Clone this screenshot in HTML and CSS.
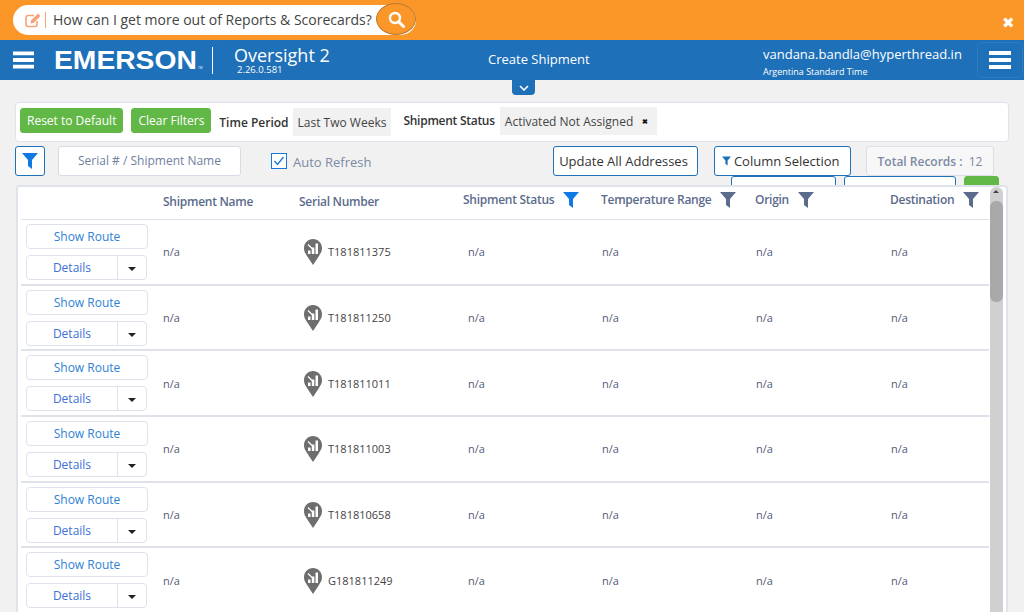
FILE: index.html
```html
<!DOCTYPE html>
<html lang="en">
<head>
  <meta charset="UTF-8">
  <meta name="viewport" content="width=device-width, initial-scale=1.0">
  <title>Create Shipment</title>
  <link rel="stylesheet" href="styles.css">
</head>
<body>
  <svg class="defs" width="0" height="0">
    <symbol id="funnel" viewBox="0 0 16 16"><path d="M0 0h16L10 7v9L6 13V7z"/></symbol>
    <symbol id="pin" viewBox="0 0 18 26">
      <path d="M9 0c5 0 9 4 9 9 0 4-1.500 5-3 8l-6 9-6-9C1.500 14 0 13 0 9c0-5 4-9 9-9z" fill="#6e6e6e"/>
      <path d="M4 15h2.500v-3.500H4zM7.800 15h2.500V8.500H7.800zM11.500 15H14V4.500h-2.500z" fill="#fff"/>
      <path d="M4 5.500l6 6" stroke="#fff" stroke-width="1.300"/>
    </symbol>
    <symbol id="bars" viewBox="0 0 22 18"><path d="M0 0h22v4H0zM0 7h22v4H0zM0 14h22v4H0z"/></symbol>
  </svg>

  <div class="promo">
    <div class="ask">
      <svg class="ask-icon" width="17" height="16" viewBox="0 0 17 16"><path d="M12 9v3.500a2 2 0 0 1-2 2H3a2 2 0 0 1-2-2v-7a2 2 0 0 1 2-2h6" fill="none" stroke="#f5a277" stroke-width="1.600"/><path d="M6 8.500L13 1.500l2.500 2.500-7 7-3 .5z" fill="#f5a277"/></svg>
      <span class="ask-text">How can I get more out of Reports &amp; Scorecards?</span>
      <span class="ask-go">
        <svg width="17" height="17" viewBox="0 0 17 17"><circle cx="7" cy="7" r="5" fill="none" stroke="#fff" stroke-width="2.400"/><path d="M10.500 10.500l5 5" stroke="#fff" stroke-width="3" stroke-linecap="round"/></svg>
      </span>
    </div>
    <span class="promo-close">&#10006;</span>
  </div>

  <header class="topbar">
    <svg class="bars" width="21" height="18" fill="#fff"><use href="#bars"/></svg>
    <span class="logo"><span class="logo-word">EMERSON</span><span class="logo-tm">TM</span></span>
    <div class="product">
      <div class="product-name">Oversight 2</div>
      <div class="product-ver">2.26.0.581</div>
    </div>
    <div class="page-title">Create Shipment</div>
    <div class="user">
      <div class="user-mail">vandana.bandla@hyperthread.in</div>
      <div class="user-tz">Argentina Standard Time</div>
    </div>
    <button class="menu-btn"><svg width="22" height="18" fill="#fff"><use href="#bars"/></svg></button>
  </header>
  <div class="pull-wrap">
    <span class="pull"><svg width="10" height="6" viewBox="0 0 10 6"><path d="M1 1l4 4 4-4" fill="none" stroke="#fff" stroke-width="1.600"/></svg></span>
  </div>

  <main class="content">
    <section class="filters">
      <button class="green-btn">Reset to Default</button>
      <button class="green-btn">Clear Filters</button>
      <span class="f-label">Time Period</span>
      <span class="f-chip">Last Two Weeks</span>
      <span class="f-label f-label-second">Shipment Status</span>
      <span class="f-chip f-chip-status">Activated Not Assigned <b class="chip-x">&#10006;</b></span>
    </section>

    <section class="tools">
      <button class="icon-btn"><svg width="16" height="16" fill="#0f7ae5"><use href="#funnel"/></svg></button>
      <div class="search">Serial # / Shipment Name</div>
      <label class="auto"><span class="check"><svg width="12" height="10" viewBox="0 0 12 10"><path d="M1.500 5l3 3.500 6-7.500" fill="none" stroke="#1478dc" stroke-width="1.300"/></svg></span>Auto Refresh</label>
      <button class="line-btn update-btn">Update All Addresses</button>
      <button class="line-btn col-btn"><svg width="9" height="10" fill="#1e70b9"><use href="#funnel"/></svg> Column Selection</button>
      <div class="total"><b>Total Records :</b> <span class="total-num">12</span></div>
    </section>

    <div class="hidden-row">
      <span class="peek peek-a"></span>
      <span class="peek peek-b"></span>
      <span class="peek peek-c"></span>
    </div>

    <section class="card">
      <div class="table">
        <div class="row head">
          <div></div>
          <div class="th low">Shipment Name</div>
          <div class="th low">Serial Number</div>
          <div class="th">Shipment Status <svg width="16" height="16" fill="#0f7ae5"><use href="#funnel"/></svg></div>
          <div class="th">Temperature Range <svg width="16" height="16" fill="#5b6b8c"><use href="#funnel"/></svg></div>
          <div class="th">Origin <svg width="16" height="16" fill="#5b6b8c"><use href="#funnel"/></svg></div>
          <div class="th">Destination <svg width="16" height="16" fill="#5b6b8c"><use href="#funnel"/></svg></div>
        </div>
        <div id="rows"></div>
      </div>
      <div class="scroll">
        <span class="scroll-up"></span>
        <span class="scroll-thumb"></span>
      </div>
    </section>
  </main>

  <script>
    const serials = ['T181811375', 'T181811250', 'T181811011', 'T181811003', 'T181810658', 'G181811249'];
    const rows = document.getElementById('rows');

    serials.forEach(serial => {
      const row = document.createElement('div');
      row.className = 'row item';
      row.innerHTML = `
        <div class="actions">
          <button class="route-btn">Show Route</button>
          <div class="details"><span class="details-main">Details</span><span class="details-caret"></span></div>
        </div>
        <div class="cell">n/a</div>
        <div class="cell serial"><svg width="18" height="26"><use href="#pin"/></svg>${serial}</div>
        <div class="cell pad">n/a</div>
        <div class="cell pad-sm">n/a</div>
        <div class="cell pad-sm">n/a</div>
        <div class="cell pad-sm">n/a</div>`;
      rows.appendChild(row);
    });
  </script>
</body>
</html>
```

FILE: styles.css
```css
* {
  box-sizing: border-box;
}

html,
body {
  height: 100%;
}

body {
  font-family: "Open Sans", Arial, sans-serif;
  background-color: #f1f1f1;
  margin: 0;
  overflow: hidden;
  color: #333;
}

button {
  font-family: inherit;
  cursor: pointer;
}

.defs {
  display: block;
  height: 0;
}

/* orange strip */
.promo {
  height: 40px;
  background-color: #fb9629;
  display: flex;
  align-items: center;
  justify-content: space-between;
  padding: 0 9px 0 13px;
}

.ask {
  width: 403px;
  height: 30px;
  background: #fff;
  border-radius: 15px;
  display: flex;
  align-items: center;
  padding-left: 12px;
  position: relative;
}

.ask-icon {
  margin-right: 3px;
}

.ask-text {
  border-left: 1px solid #f5a277;
  padding-left: 7px;
  font-size: 14px;
  line-height: 16px;
  color: #444;
  white-space: nowrap;
}

.ask-go {
  position: absolute;
  right: 0;
  top: -2px;
  width: 40px;
  height: 32px;
  border-radius: 50%;
  border: 1px solid #bd7a35;
  background: #fb9629;
  display: flex;
  align-items: center;
  justify-content: center;
}

.promo-close {
  color: #fff;
  font-size: 15px;
  margin-top: 4px;
}

/* blue bar */
.topbar {
  height: 40px;
  background-color: #1e70b9;
  color: #fff;
  display: flex;
  align-items: center;
  padding-left: 13px;
}

.logo {
  width: 159px;
  margin-left: 20px;
  height: 27px;
  border-right: 1px solid #fff;
  display: flex;
  align-items: center;
  white-space: nowrap;
  position: relative;
}

.logo-word {
  font-family: "Liberation Sans", Arial, sans-serif;
  font-weight: 700;
  font-size: 25px;
  transform: scaleX(1.13);
  transform-origin: left center;
}

.logo-tm {
  position: absolute;
  left: 144px;
  bottom: 4px;
  font-size: 3px;
}

.product {
  width: 275px;
  padding-left: 21px;
}

.product-name {
  font-size: 18px;
  line-height: 20px;
}

.product-ver {
  font-size: 9.500px;
  line-height: 10px;
  padding-left: 3px;
}

.page-title {
  width: 275px;
  font-size: 13px;
  margin-top: -2px;
}

.user {
  width: 214px;
}

.user-mail {
  font-size: 13px;
  line-height: 16px;
  margin-top: 3px;
}

.user-tz {
  font-size: 9px;
  line-height: 13px;
  margin-top: 3px;
}

.menu-btn {
  width: 46px;
  height: 36px;
  background: none;
  border: 1px solid #2a7cc4;
  border-radius: 4px;
  display: flex;
  align-items: center;
  justify-content: center;
  padding: 0;
}

.pull-wrap {
  height: 15px;
  padding-left: 512px;
}

.pull {
  width: 23px;
  height: 15px;
  display: flex;
  align-items: center;
  justify-content: center;
  background: #1e70b9;
  border-radius: 0 0 4px 4px;
}

/* main area */
.content {
  padding: 7px 15px 0;
}

.filters {
  height: 40px;
  width: 994px;
  background: #fff;
  border: 1px solid #e0e3ec;
  border-radius: 4px;
  display: flex;
  align-items: center;
  padding-left: 4px;
}

.green-btn {
  height: 25px;
  margin-bottom: 3px;
  background-color: #62b846;
  border: 1px solid #62b846;
  border-radius: 3px;
  color: #fff;
  font-size: 12px;
  padding: 0 6px;
  margin-right: 8px;
  white-space: nowrap;
}

.f-label {
  font-size: 12px;
  font-weight: 600;
  color: #333;
}

.f-label-second {
  letter-spacing: -0.270px;
  margin-left: 12px;
  margin-bottom: 3px;
}

.f-chip {
  height: 28px;
  margin-left: 4px;
  background: #f1f1f1;
  font-size: 12px;
  color: #444;
  display: flex;
  align-items: center;
  padding: 0 5px;
  white-space: nowrap;
}

.f-chip-status {
  margin-left: 5px;
  margin-bottom: 2px;
  padding-right: 8px;
  width: 157px;
}

.chip-x {
  font-size: 7px;
  color: #111;
  margin-left: 9px;
}

.tools {
  display: flex;
  height: 30px;
  margin-top: 4px;
  width: 994px;
}

.icon-btn {
  width: 30px;
  height: 30px;
  background: #fff;
  border: 1px solid #1e70b9;
  border-radius: 3px;
  padding: 0;
  display: flex;
  align-items: center;
  justify-content: center;
}

.search {
  width: 183px;
  height: 30px;
  margin-left: 13px;
  background: #fff;
  border: 1px solid #d8dce6;
  border-radius: 3px;
  text-align: center;
  line-height: 27px;
  font-size: 12px;
  color: #6f7fa0;
}

.auto {
  display: flex;
  align-items: center;
  font-size: 13px;
  color: #7c8aa5;
  margin-left: 30px;
  width: 282px;
  padding-top: 2px;
}

.check {
  width: 16px;
  height: 16px;
  border: 1px solid #1478dc;
  background: #fff;
  display: flex;
  align-items: center;
  justify-content: center;
  margin-right: 6px;
  margin-top: -2px;
}

.line-btn {
  height: 30px;
  background: #fff;
  border: 1px solid #1e70b9;
  border-radius: 3px;
  font-size: 13px;
  color: #333;
  padding: 0 4px 0 0;
  white-space: nowrap;
}

.update-btn {
  width: 145px;
}

.col-btn {
  width: 137px;
  margin-left: 16px;
}

.total {
  width: 128px;
  height: 30px;
  margin-left: 15px;
  background: #f7f7f7;
  border: 1px solid #dcdfe8;
  border-radius: 3px;
  text-align: center;
  line-height: 30px;
  font-size: 12px;
  color: #7c8aa5;
}

.total b {
  font-weight: 600;
}

.total-num {
  margin-left: 3px;
}

/* buttons that sit behind the table card */
.hidden-row {
  height: 9px;
  overflow: hidden;
  position: relative;
}

.peek {
  position: absolute;
  top: 0;
  height: 20px;
  background: #fff;
  border: 1px solid #1e70b9;
  border-radius: 3px;
}

.peek-a {
  left: 716px;
  width: 105px;
}

.peek-b {
  left: 829px;
  width: 112px;
}

.peek-c {
  left: 949px;
  width: 35px;
  background: #62b846;
  border-color: #62b846;
}

.card {
  width: 992px;
  height: 440px;
  margin-left: 1px;
  background: #fff;
  border: 2px solid #e0e3ec;
  border-radius: 4px;
  display: flex;
  overflow: hidden;
}

.table {
  width: 971px;
  flex: none;
}

.row {
  display: grid;
  grid-template-columns: 142px 136px 164px 138px 154px 135px 102px;
}

.head {
  height: 33px;
  padding-bottom: 8px;
  border-bottom: 1px solid #dfe2ea;
  margin-left: 3px;
}

.th {
  font-size: 12px;
  font-weight: 600;
  letter-spacing: -0.270px;
  color: #5b6b8c;
  display: flex;
  align-items: center;
  gap: 9px;
  white-space: nowrap;
}

.th svg {
  margin-top: 2px;
}

.th.low {
  padding-top: 4px;
}

.item {
  height: 65.650px;
  margin-left: 3px;
  border-bottom: 2px solid #dfe2ea;
}

.actions {
  padding: 4px 0 0 5px;
}

.route-btn {
  display: block;
  width: 122px;
  height: 25px;
  padding: 0;
  background: #fff;
  border: 1px solid #dfe2ea;
  border-radius: 4px;
  color: #2f7fd6;
  font-size: 12px;
}

.details {
  display: flex;
  width: 121px;
  height: 25px;
  margin-top: 6px;
  border: 1px solid #dfe2ea;
  border-radius: 4px;
}

.details-main {
  width: 91px;
  border-right: 1px solid #dfe2ea;
  text-align: center;
  line-height: 23px;
  font-size: 12px;
  color: #3c6fd8;
}

.details-caret {
  flex: 1;
  position: relative;
}

.details-caret::after {
  content: "";
  position: absolute;
  left: 10px;
  top: 11px;
  border: 4px solid transparent;
  border-top-color: #222;
  border-bottom: 0;
}

.cell {
  font-size: 11px;
  color: #555a78;
  display: flex;
  align-items: center;
}

.serial {
  gap: 6px;
  color: #444;
  padding-left: 5px;
}

.serial svg {
  margin-top: 1px;
}

.pad {
  padding-left: 5px;
}

.pad-sm {
  padding-left: 1px;
}

.scroll {
  width: 13px;
  flex: none;
  background: #d0d0d0;
  border-radius: 6px 6px 0 0;
  margin-left: 1px;
}

.scroll-up {
  display: block;
  height: 14px;
  position: relative;
}

.scroll-up::after {
  content: "";
  position: absolute;
  left: 3px;
  top: 3px;
  border: 3.500px solid transparent;
  border-bottom-color: #444;
  border-top: 0;
}

.scroll-thumb {
  display: block;
  height: 101px;
  background: #a9a9a9;
  border-radius: 6px;
}
```
